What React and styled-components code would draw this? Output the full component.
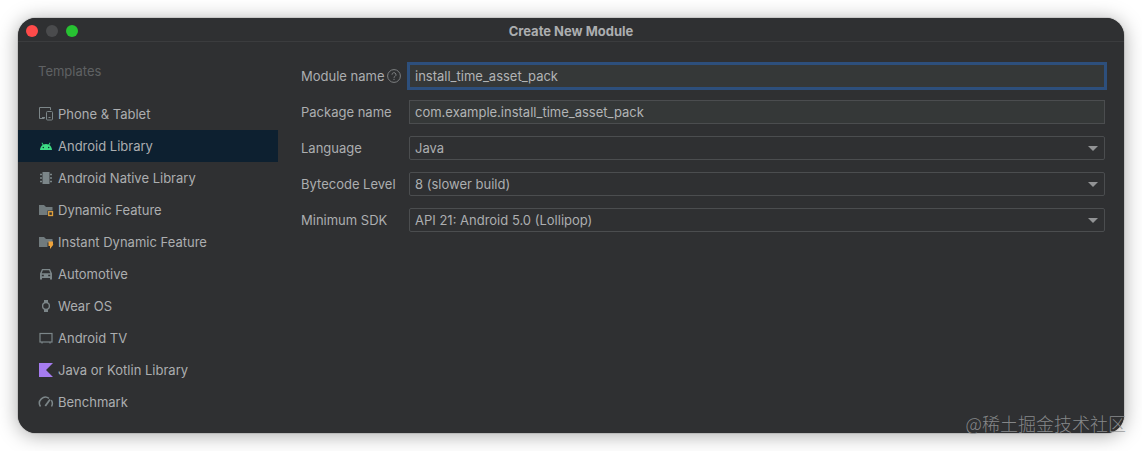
import React, { useState } from "react";
import styled, { createGlobalStyle } from "styled-components";

const GlobalStyle = createGlobalStyle`
  * {
    box-sizing: border-box;
  }
  body {
    margin: 0;
    background-color: #fff;
    font-family: Inter, "Noto Sans CJK SC", sans-serif;
    font-size: 13px;
    line-height: 16px;
  }
`;
const Page = styled.div`
  position: relative;
  padding: 18px;
`;
const Dialog = styled.main`
  border-radius: 18px;
  background-color: #2f3032;
  color: #acaeb0;
  box-shadow:
    0 0 1px #111,
    0 2px 20px rgba(0, 0, 0, 0.35);
  overflow: hidden;
`;
const TitleBar = styled.header`
  display: grid;
  grid-template-columns: 1fr auto 1fr;
  align-items: center;
  height: 24px;
  padding: 2px 8px 0;
  border-bottom: 1px solid #3b3c3e;
`;
const WindowButtons = styled.div`
  display: flex;
  gap: 8px;
`;
const WindowButton = styled.button`
  width: 12px;
  height: 12px;
  padding: 0;
  border: none;
  border-radius: 50%;
  background-color: ${(props) => props.$color};
`;
const Title = styled.h1`
  margin: 0;
  font-size: 13px;
  font-weight: 700;
`;
const Content = styled.div`
  display: flex;
`;
const Sidebar = styled.nav`
  flex: 0 0 260px;
  padding: 21px 0 15px;
`;
const SidebarTitle = styled.h2`
  margin: 0;
  padding: 0 20px 19px;
  color: #5f6163;
  font-size: 13px;
  font-weight: 400;
`;
const TemplateButton = styled.button`
  display: flex;
  align-items: center;
  gap: 4px;
  width: 100%;
  height: 32px;
  padding: 0 20px;
  border: none;
  background-color: ${(props) => (props.$active ? "#0d2030" : "transparent")};
  color: inherit;
  font: inherit;
  text-align: left;
`;
const TemplateIcon = styled.svg`
  flex: none;
  width: 16px;
  height: 16px;
  fill: none;
  stroke: #7c8689;
`;
const Form = styled.form`
  display: grid;
  flex: 1;
  grid-template-columns: 100px minmax(0, 1fr);
  grid-auto-rows: 24px;
  align-content: start;
  align-items: center;
  gap: 12px 8px;
  padding: 22px 19px 22px 23px;
`;
const LabelCell = styled.div`
  display: flex;
  align-items: center;
  justify-content: space-between;
`;
const HelpButton = styled.button`
  display: flex;
  padding: 0;
  border: none;
  background: none;
`;
const TextField = styled.input`
  width: 100%;
  height: 24px;
  padding: 0 5px;
  border: 1px solid ${(props) => (props.$selected ? "#2d4f7c" : "#4b4d4f")};
  border-radius: 0;
  outline: none;
  background-color: #353838;
  color: #b2b4b5;
  font: inherit;
  box-shadow: ${(props) => (props.$selected ? "0 0 0 2px #2d4f7c" : "none")};
`;
const SelectBox = styled.div`
  position: relative;
`;
const Select = styled.select`
  display: block;
  width: 100%;
  height: 24px;
  padding: 0 24px 0 5px;
  appearance: none;
  border: 1px solid #4b4d4f;
  border-radius: 2px;
  outline: none;
  background-color: #2f3032;
  color: #acaeb0;
  font: inherit;
`;
const Arrow = styled.svg`
  position: absolute;
  top: 10px;
  right: 7px;
  pointer-events: none;
`;
const Watermark = styled.div`
  position: absolute;
  right: 16px;
  bottom: 16px;
  color: rgba(145, 147, 149, 0.9);
  font-family: "Noto Sans CJK SC", sans-serif;
  font-size: 18px;
  font-weight: 300;
  line-height: 24px;
`;

const folder = <path d="M1 3h5l2 2h6.500v3.500h-5V13H1z" fill="#717b7e" stroke="none" />;

const templates = [
  {
    name: "Phone & Tablet",
    icon: (
      <>
        <path d="M12.500 4V1.500h-11v11H6.500M4 11.500h3" />
        <rect x="8.500" y="5.500" width="6" height="8.500" rx="1" />
        <path d="M10.500 11.500h2" />
      </>
    ),
  },
  {
    name: "Android Library",
    icon: (
      <g stroke="none">
        <path
          d="M2 12c.2-2.400 1.200-4 2.700-5L3.500 5l.7-.4L5.500 6.600a7 7 0 0 1 5 0l1.300-2 .7.400-1.200 2c1.500 1 2.500 2.600 2.700 5z"
          fill="#3ddc84"
        />
        <circle cx="5.300" cy="9.500" r=".7" fill="#0d2030" />
        <circle cx="10.700" cy="9.500" r=".7" fill="#0d2030" />
      </g>
    ),
  },
  {
    name: "Android Native Library",
    icon: (
      <>
        <rect x="4.500" y="2" width="7" height="12" fill="#7c8689" stroke="none" />
        <path d="M2 4.500h2m8 0h2M2 8h2m8 0h2M2 11.500h2m8 0h2" strokeWidth="1.600" />
      </>
    ),
  },
  {
    name: "Dynamic Feature",
    icon: (
      <>
        {folder}
        <rect x="10.700" y="9.700" width="3.800" height="3.800" stroke="#e0a03c" strokeWidth="1.300" />
      </>
    ),
  },
  {
    name: "Instant Dynamic Feature",
    icon: (
      <>
        {folder}
        <path d="M10.500 7.500h4.500v3h.5L12 15v-3h-1.500z" fill="#eda23b" stroke="none" />
      </>
    ),
  },
  {
    name: "Automotive",
    icon: (
      <>
        <path
          d="M4 3h8l2 4.500v6h-2V12H4v1.500H2v-6z"
          fill="#7c8689"
          stroke="none"
        />
        <path d="M4.900 4.200h6.200L12.300 7.200H3.700z" fill="#2f3032" stroke="none" />
        <path d="M3.800 9.500h2m4.400 0h2" stroke="#2f3032" strokeWidth="1.400" />
      </>
    ),
  },
  {
    name: "Wear OS",
    icon: (
      <>
        <circle cx="8" cy="8" r="3.400" strokeWidth="1.400" />
        <path d="M6 3.500h4M6 12.500h4" strokeWidth="3" />
      </>
    ),
  },
  {
    name: "Android TV",
    icon: (
      <>
        <rect x="2" y="3.500" width="12" height="8.500" strokeWidth="1.200" />
        <path d="M4 12v1.500m8-1.500v1.500" strokeWidth="1.200" />
      </>
    ),
  },
  {
    name: "Java or Kotlin Library",
    icon: <path d="M1 1h14L8 8l7 7H1z" fill="#a67cf0" stroke="none" />,
  },
  {
    name: "Benchmark",
    icon: (
      <>
        <path d="M2.500 12.500a6 6 0 0 1 8.500-8.200M13.300 6.200a6 6 0 0 1 .2 6.300" strokeWidth="1.500" />
        <path d="M7.300 12L12 5.500" strokeWidth="1.800" />
      </>
    ),
  },
];

const selects = [
  { id: "language", label: "Language", options: ["Java", "Kotlin"] },
  { id: "bytecode", label: "Bytecode Level", options: ["8 (slower build)", "7", "6"] },
  {
    id: "minSdk",
    label: "Minimum SDK",
    options: ["API 21: Android 5.0 (Lollipop)", "API 23: Android 6.0 (Marshmallow)"],
  },
];

const App = () => {
  const [activeTemplate, setActiveTemplate] = useState("Android Library");
  const [focused, setFocused] = useState("moduleName");

  return (
    <Page>
      <GlobalStyle />
      <Dialog>
        <TitleBar>
          <WindowButtons>
            <WindowButton $color="#ff4b4a" aria-label="Close" />
            <WindowButton $color="#4a4b4d" aria-label="Minimize" />
            <WindowButton $color="#27c232" aria-label="Zoom" />
          </WindowButtons>
          <Title>Create New Module</Title>
        </TitleBar>
        <Content>
          <Sidebar>
            <SidebarTitle>Templates</SidebarTitle>
            {templates.map((template) => (
              <TemplateButton
                key={template.name}
                type="button"
                $active={template.name === activeTemplate}
                onClick={() => setActiveTemplate(template.name)}
              >
                <TemplateIcon viewBox="0 0 16 16" aria-hidden="true">
                  {template.icon}
                </TemplateIcon>
                {template.name}
              </TemplateButton>
            ))}
          </Sidebar>
          <Form>
            <LabelCell>
              <label htmlFor="moduleName">Module name</label>
              <HelpButton type="button" aria-label="Help">
                <svg width="14" height="14" fill="none" stroke="#7d7f81">
                  <circle cx="7" cy="7" r="6.400" />
                  <path d="M5 5.700a2 2 0 1 1 3 1.700c-.7.400-1 .7-1 1.400M7 9.800v1.200" />
                </svg>
              </HelpButton>
            </LabelCell>
            <TextField
              id="moduleName"
              defaultValue="install_time_asset_pack"
              $selected={focused === "moduleName"}
              onFocus={() => setFocused("moduleName")}
            />
            <label htmlFor="packageName">Package name</label>
            <TextField
              id="packageName"
              defaultValue="com.example.install_time_asset_pack"
              $selected={focused === "packageName"}
              onFocus={() => setFocused("packageName")}
            />
            {selects.map((select) => (
              <React.Fragment key={select.id}>
                <label htmlFor={select.id}>{select.label}</label>
                <SelectBox>
                  <Select id={select.id}>
                    {select.options.map((option) => (
                      <option key={option}>{option}</option>
                    ))}
                  </Select>
                  <Arrow width="10" height="5" aria-hidden="true">
                    <path d="M0 0h10L5 5z" fill="#929395" />
                  </Arrow>
                </SelectBox>
              </React.Fragment>
            ))}
          </Form>
        </Content>
      </Dialog>
      <Watermark>@稀土掘金技术社区</Watermark>
    </Page>
  );
};
export default App;
